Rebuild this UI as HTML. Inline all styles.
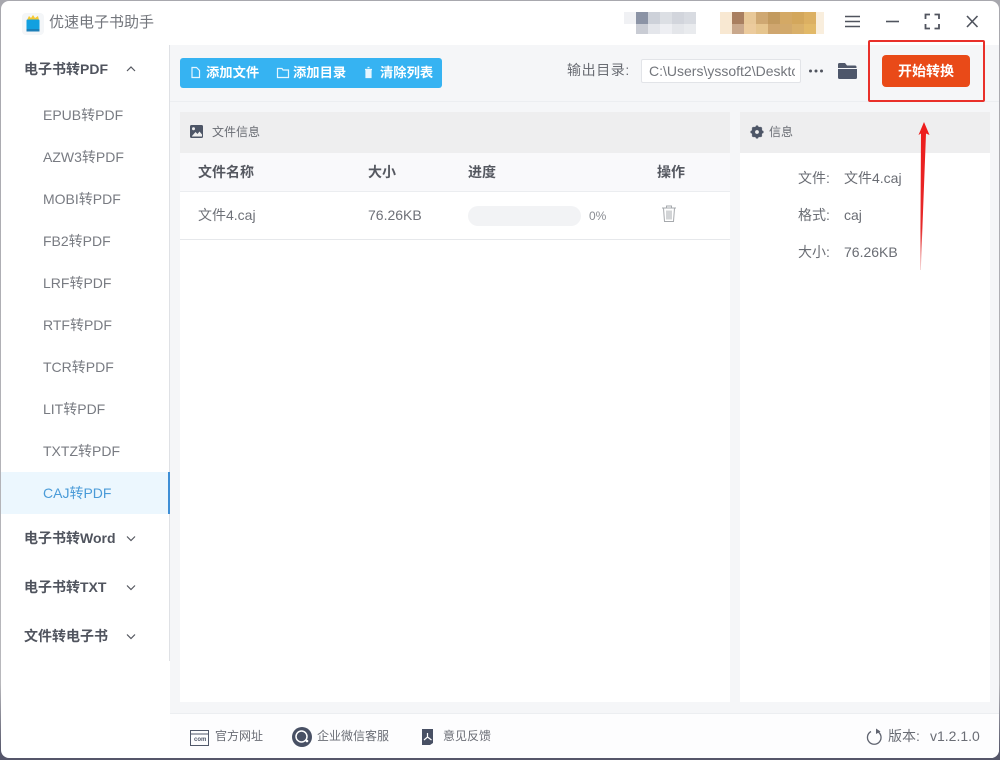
<!DOCTYPE html>
<html lang="zh">
<head>
<meta charset="utf-8">
<title>优速电子书助手</title>
<style>
html,body{margin:0;padding:0;width:1000px;height:760px;overflow:hidden;background:linear-gradient(180deg,#a8a8ae 0,#b8b8bc 90%,#55566a 99%);}
*{box-sizing:border-box;}
#w{position:absolute;left:1px;top:1px;width:998px;height:757px;background:#fff;border-radius:8px;overflow:hidden;}
#p{position:absolute;left:0;top:0;width:1000px;height:760px;font-family:"Liberation Sans","Noto Sans CJK SC",sans-serif;color:#606266;}
.a{position:absolute;white-space:nowrap;line-height:20px;}
.r{position:absolute;}
.m{font-size:14px;font-weight:700;color:#50545e;left:24px;}
.s{font-size:14px;color:#787b82;left:43px;}
.w{color:#fff;font-size:13.3px;font-weight:700;top:63px;}
.h{font-size:14px;font-weight:700;color:#555860;top:162px;}
.t{font-size:14px;color:#6e7178;}
.i{font-size:14px;color:#6a6d74;}
.f{font-size:12px;color:#6a6d75;top:726px;}
svg{position:absolute;overflow:visible;}
</style>
</head>
<body>
<div id="w"></div>
<div id="p">
<!-- main backgrounds -->
<div class="r" style="left:170px;top:45px;width:829px;height:668px;background:#f5f6f8;"></div>
<div class="r" style="left:170px;top:713px;width:829px;height:45px;background:#fdfdfe;border-radius:0 0 8px 0;border-top:1px solid #eceef1;"></div>
<div class="r" style="left:169px;top:45px;width:1px;height:616px;background:#dfe1e5;"></div>
<div class="r" style="left:170px;top:101px;width:829px;height:1px;background:#eceef1;"></div>

<!-- title bar -->
<svg style="left:20px;top:12px" width="26" height="24" viewBox="0 0 26 24">
<rect x="2" y="1" width="22" height="22" rx="4" fill="#f4f6f8"/>
<path d="M7 8 L9 4 L11 6 L13 3 L15 6 L18 4 L19 8Z" fill="#f5c933"/>
<rect x="6.5" y="7.5" width="13" height="11" rx="1" fill="#12a0e0"/>
<rect x="6.5" y="17" width="13" height="2.5" fill="#1c7fb8"/>
</svg>
<div class="a" style="left:49px;top:13px;font-size:15px;color:#73767c;">优速电子书助手</div>

<!-- blurred mosaic -->
<div class="r" style="left:624px;top:12px;width:12px;height:12px;background:#f0f1f4;"></div>
<div class="r" style="left:636px;top:12px;width:12px;height:12px;background:#8b93a5;"></div>
<div class="r" style="left:648px;top:12px;width:12px;height:12px;background:#cdd1d9;"></div>
<div class="r" style="left:660px;top:12px;width:12px;height:12px;background:#dcdfe4;"></div>
<div class="r" style="left:672px;top:12px;width:12px;height:12px;background:#d2d5dc;"></div>
<div class="r" style="left:684px;top:12px;width:12px;height:12px;background:#d8dbe1;"></div>
<div class="r" style="left:636px;top:24px;width:12px;height:10px;background:#c9ccd4;"></div>
<div class="r" style="left:648px;top:24px;width:12px;height:10px;background:#e4e6eb;"></div>
<div class="r" style="left:660px;top:24px;width:12px;height:10px;background:#eeeff3;"></div>
<div class="r" style="left:672px;top:24px;width:12px;height:10px;background:#e4e6ea;"></div>
<div class="r" style="left:684px;top:24px;width:12px;height:10px;background:#e9ebee;"></div>
<div class="r" style="left:720px;top:12px;width:12px;height:22px;background:#f8e8d2;"></div>
<div class="r" style="left:732px;top:12px;width:12px;height:12px;background:#a97f60;"></div>
<div class="r" style="left:744px;top:12px;width:12px;height:12px;background:#e8c898;"></div>
<div class="r" style="left:756px;top:12px;width:12px;height:12px;background:#cfa872;"></div>
<div class="r" style="left:768px;top:12px;width:12px;height:12px;background:#c29a5f;"></div>
<div class="r" style="left:780px;top:12px;width:12px;height:12px;background:#d4a965;"></div>
<div class="r" style="left:792px;top:12px;width:12px;height:12px;background:#d3a75c;"></div>
<div class="r" style="left:804px;top:12px;width:12px;height:12px;background:#dcb062;"></div>
<div class="r" style="left:816px;top:12px;width:8px;height:22px;background:#f9eedd;"></div>
<div class="r" style="left:732px;top:24px;width:12px;height:10px;background:#c9a88c;"></div>
<div class="r" style="left:744px;top:24px;width:12px;height:10px;background:#eccb9d;"></div>
<div class="r" style="left:756px;top:24px;width:12px;height:10px;background:#e6c58e;"></div>
<div class="r" style="left:768px;top:24px;width:12px;height:10px;background:#cfa66f;"></div>
<div class="r" style="left:780px;top:24px;width:12px;height:10px;background:#d2a96b;"></div>
<div class="r" style="left:792px;top:24px;width:12px;height:10px;background:#d9b06a;"></div>
<div class="r" style="left:804px;top:24px;width:12px;height:10px;background:#e2b968;"></div>

<!-- window controls -->
<svg style="left:840px;top:10px" width="150" height="24" viewBox="0 0 150 24" fill="none" stroke="#50545e" stroke-width="1.6">
<path d="M5 6.5H20M5 11.5H20M5 16.5H20" stroke-width="1.4"/>
<path d="M46 11.5H59"/>
<path d="M85.5 9V4.5H90M94.5 4.5H99V9M99 14V18.5H94.5M90 18.5H85.5V14" stroke-width="1.8"/>
<path d="M127 6L137.5 17M137.5 6L127 17" stroke-width="1.6"/>
</svg>

<!-- sidebar -->
<div class="a m" style="top:59px;">电子书转PDF</div>
<svg style="left:126px;top:65px" width="10" height="7" fill="none" stroke="#555860" stroke-width="1.2"><path d="M1 6L5 2L9 6"/></svg>
<div class="a s" style="top:105px;">EPUB转PDF</div>
<div class="a s" style="top:147px;">AZW3转PDF</div>
<div class="a s" style="top:189px;">MOBI转PDF</div>
<div class="a s" style="top:231px;">FB2转PDF</div>
<div class="a s" style="top:273px;">LRF转PDF</div>
<div class="a s" style="top:315px;">RTF转PDF</div>
<div class="a s" style="top:357px;">TCR转PDF</div>
<div class="a s" style="top:399px;">LIT转PDF</div>
<div class="a s" style="top:441px;">TXTZ转PDF</div>
<div class="r" style="left:1px;top:472px;width:169px;height:42px;background:#ecf7fe;border-right:2px solid #3f8fd6;"></div>
<div class="a s" style="top:483px;color:#4a9bd8;">CAJ转PDF</div>
<div class="a m" style="top:528px;">电子书转Word</div>
<div class="a m" style="top:577px;">电子书转TXT</div>
<div class="a m" style="top:626px;">文件转电子书</div>
<svg style="left:126px;top:535px" width="10" height="7" fill="none" stroke="#555860" stroke-width="1.2"><path d="M1 1.5L5 5.5L9 1.5"/></svg>
<svg style="left:126px;top:584px" width="10" height="7" fill="none" stroke="#555860" stroke-width="1.2"><path d="M1 1.5L5 5.5L9 1.5"/></svg>
<svg style="left:126px;top:633px" width="10" height="7" fill="none" stroke="#555860" stroke-width="1.2"><path d="M1 1.5L5 5.5L9 1.5"/></svg>

<!-- toolbar -->
<div class="r" style="left:180px;top:58px;width:262px;height:30px;background:#36b3f2;border-radius:3px;"></div>
<svg style="left:190px;top:66px" width="180" height="14" fill="none" stroke="#e6f6ff" stroke-width="1.2">
<path d="M2 1.5H6.5L9.5 4.5V11.5H2Z"/>
<path d="M87.5 2.5H92L93 4H98.5V11.5H87.5Z"/>
<path d="M175 3.5H182M176 3.5V11.5H181V3.5M177.5 1.5H179.5" fill="#e6f6ff"/>
</svg>
<div class="a w" style="left:206px;">添加文件</div>
<div class="a w" style="left:293px;">添加目录</div>
<div class="a w" style="left:380px;">清除列表</div>

<div class="a" style="left:567px;top:60px;font-size:14px;letter-spacing:.6px;color:#6a6d74;">输出目录:</div>
<div class="r" style="left:641px;top:59px;width:160px;height:24px;background:#fff;border:1px solid #e2e4e8;border-radius:2px;overflow:hidden;">
<div class="a" style="left:7px;top:1px;font-size:14px;color:#73767c;width:146px;overflow:hidden;">C:\Users\yssoft2\Desktop</div>
</div>
<svg style="left:808px;top:68px" width="18" height="6" fill="#50545e"><circle cx="2.5" cy="3" r="1.5"/><circle cx="8" cy="3" r="1.5"/><circle cx="13.5" cy="3" r="1.5"/></svg>
<svg style="left:837px;top:62px" width="21" height="18"><path d="M1 2.5Q1 1 2.5 1H8L10 3.5H18Q19.5 3.5 19.5 5V6H1Z" fill="#50586a"/><path d="M1 7H20V15.5Q20 17 18.5 17H2.5Q1 17 1 15.5Z" fill="#4d566a"/></svg>

<!-- start button + red frame -->
<div class="r" style="left:882px;top:55px;width:88px;height:32px;background:#e94a18;border-radius:4px;"></div>
<div class="a" style="left:882px;top:61px;width:88px;text-align:center;color:#fff;font-size:14px;font-weight:700;">开始转换</div>
<div class="r" style="left:868px;top:40px;width:117px;height:62px;border:2px solid #e9302a;border-radius:2px;"></div>

<!-- left panel -->
<div class="r" style="left:180px;top:112px;width:550px;height:590px;background:#fff;"></div>
<div class="r" style="left:180px;top:112px;width:550px;height:41px;background:#eeeeef;"></div>
<svg style="left:190px;top:125px" width="13" height="13"><rect width="13" height="13" rx="1.5" fill="#4d5566"/><circle cx="3.5" cy="3.8" r="1.5" fill="#eee"/><path d="M2 11L5.5 7L7.5 9L9.5 6.5L12 9.5V11.5H2Z" fill="#eee"/></svg>
<div class="a" style="left:212px;top:122px;font-size:12px;color:#6a6d74;">文件信息</div>
<div class="r" style="left:180px;top:153px;width:550px;height:39px;background:#f9f9fb;border-bottom:1px solid #ebedf0;"></div>
<div class="a h" style="left:198px;">文件名称</div>
<div class="a h" style="left:368px;">大小</div>
<div class="a h" style="left:468px;">进度</div>
<div class="a h" style="left:657px;">操作</div>
<div class="r" style="left:180px;top:239px;width:550px;height:1px;background:#e6e8eb;"></div>
<div class="a t" style="left:198px;top:205px;">文件4.caj</div>
<div class="a t" style="left:368px;top:205px;">76.26KB</div>
<div class="r" style="left:468px;top:206px;width:113px;height:20px;background:#f2f3f5;border-radius:10px;"></div>
<div class="a" style="left:589px;top:206px;font-size:12px;color:#8a8d93;">0%</div>
<svg style="left:661px;top:205px" width="16" height="18" fill="none" stroke="#a6a9ad" stroke-width="1"><path d="M1 3H15M5.5 3V1H10.5V3M2.5 3L3.5 16.5H12.5L13.5 3M6 5.5V14.5M8 5.5V14.5M10 5.5V14.5"/></svg>

<!-- right panel -->
<div class="r" style="left:740px;top:112px;width:250px;height:590px;background:#fff;"></div>
<div class="r" style="left:740px;top:112px;width:250px;height:41px;background:#eeeeef;"></div>
<svg style="left:750px;top:125px" width="14" height="14" viewBox="0 0 14 14"><circle cx="7" cy="7" r="4.2" fill="none" stroke="#4d5566" stroke-width="2.8"/><path d="M7 0.5V13.5M0.5 7H13.5M2.4 2.4L11.6 11.6M11.6 2.4L2.4 11.6" stroke="#4d5566" stroke-width="2.2"/><circle cx="7" cy="7" r="1.9" fill="#eee"/></svg>
<div class="a" style="left:769px;top:122px;font-size:12px;color:#6a6d74;">信息</div>
<div class="a i" style="left:798px;top:168px;">文件:</div>
<div class="a i" style="left:844px;top:168px;">文件4.caj</div>
<div class="a i" style="left:798px;top:205px;">格式:</div>
<div class="a i" style="left:844px;top:205px;">caj</div>
<div class="a i" style="left:798px;top:242px;">大小:</div>
<div class="a i" style="left:844px;top:242px;">76.26KB</div>

<!-- red arrow -->
<svg style="left:915px;top:120px" width="20" height="152"><defs><linearGradient id="g" x1="0" y1="0" x2="0" y2="1"><stop offset="0" stop-color="#ee1c1c"/><stop offset=".72" stop-color="#e52a2a"/><stop offset="1" stop-color="#f3c6c6"/></linearGradient></defs><path d="M9 2L14.5 15L11 13.5L5.8 150L5.2 150L6 13.5L3.5 15Z" fill="url(#g)"/></svg>

<!-- footer -->
<svg style="left:190px;top:729px" width="19" height="17" fill="none" stroke="#50586a"><rect x=".5" y="1.5" width="18" height="15" stroke-width="1"/><path d="M.5 5H18.5" stroke-width="1"/></svg>
<div class="a" style="left:194px;top:736px;font-size:6px;line-height:8px;color:#50586a;font-weight:700;">com</div>
<div class="a f" style="left:215px;">官方网址</div>
<svg style="left:292px;top:727px" width="20" height="20"><circle cx="10" cy="10" r="10" fill="#485064"/><circle cx="9.5" cy="9.5" r="5.5" fill="none" stroke="#fff" stroke-width="1.5"/><circle cx="15" cy="14" r="1.3" fill="#fff"/></svg>
<div class="a f" style="left:317px;">企业微信客服</div>
<svg style="left:421px;top:728px" width="14" height="18"><path d="M1 1H12V15L9 17H1Z" fill="#485064"/><path d="M6.5 5V9M6.5 9L3 12M6.5 9L10.5 12" stroke="#fff" stroke-width="1.2" fill="none"/></svg>
<div class="a f" style="left:443px;">意见反馈</div>
<svg style="left:866px;top:728px" width="17" height="18" fill="none"><path d="M11.5 3.5A6.8 6.8 0 1 1 5 3.5" stroke="#606470" stroke-width="1.3"/><path d="M10 0.5L14.5 3.5L10 6Z" fill="#606470"/></svg>
<div class="a" style="left:888px;top:726px;font-size:14px;color:#6a6d75;">版本:</div>
<div class="a" style="left:930px;top:726px;font-size:14px;color:#6a6d75;">v1.2.1.0</div>
</div>
</body>
</html>
